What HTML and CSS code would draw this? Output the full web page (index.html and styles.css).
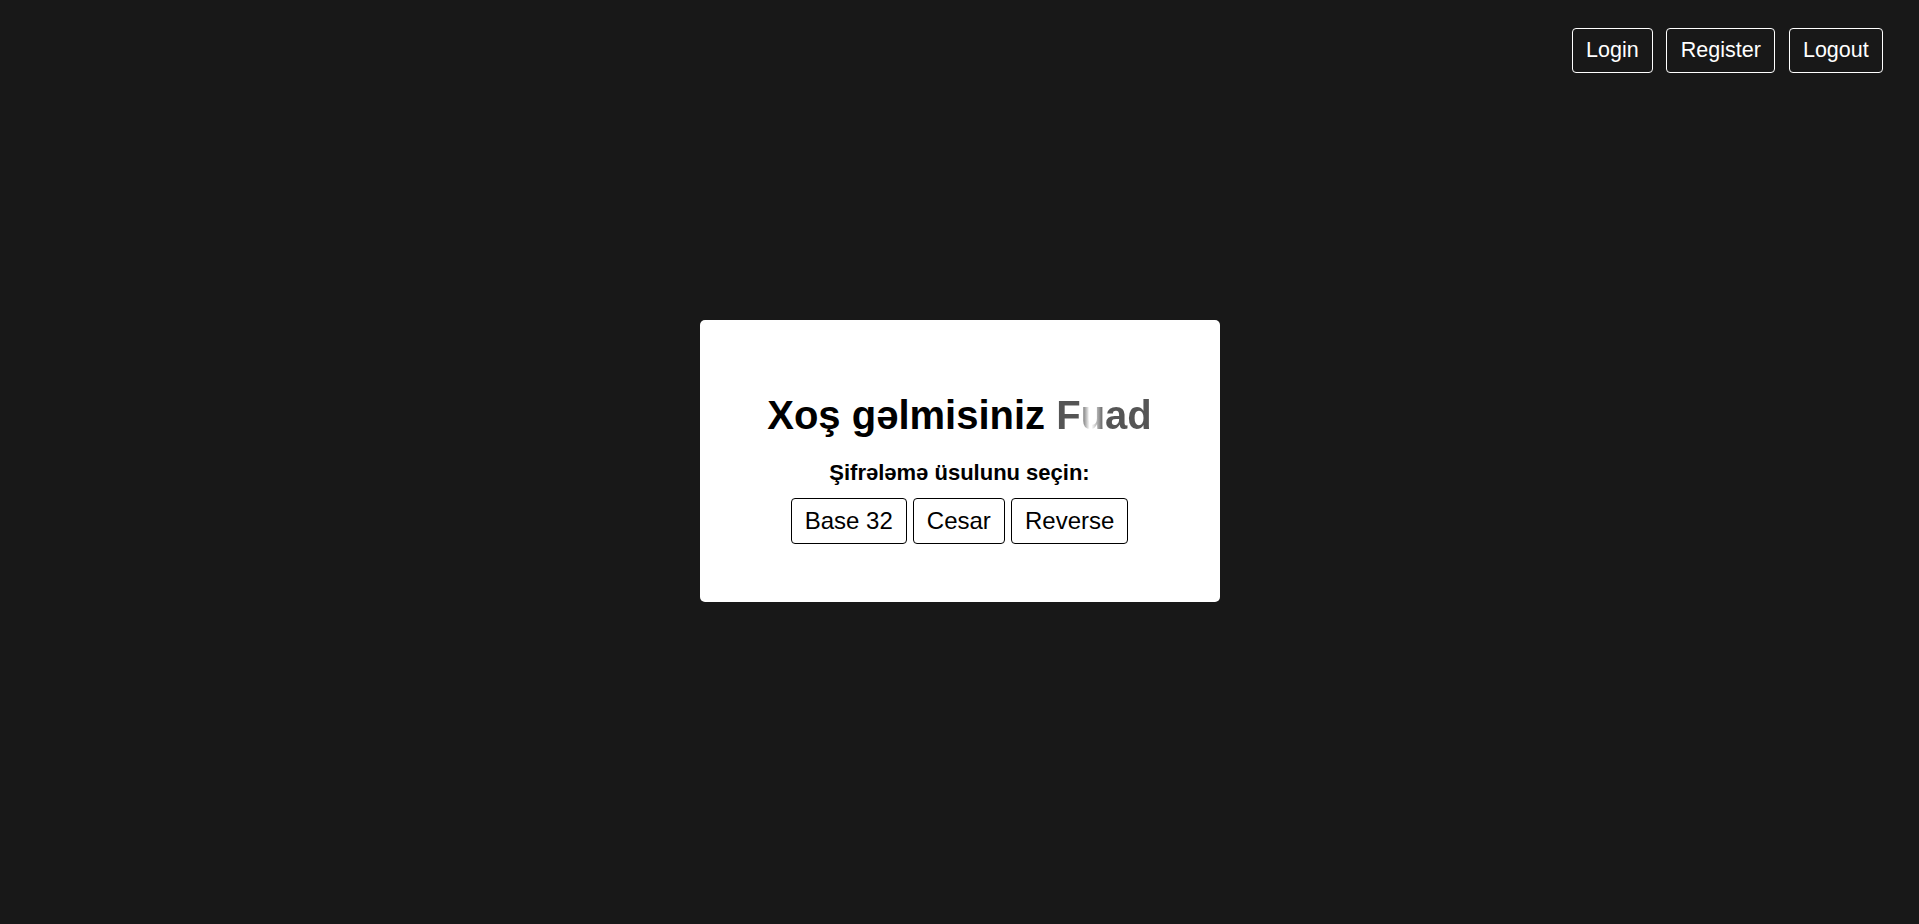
FILE: index.html
```html
<!DOCTYPE html>
<html lang="az">
<head>
<meta charset="utf-8">
<title>Şifrələmə</title>
<link rel="stylesheet" href="styles.css">
</head>
<body>
<header class="topbar">
  <nav class="nav">
    <button class="nav-btn">Login</button>
    <button class="nav-btn">Register</button>
    <button class="nav-btn">Logout</button>
  </nav>
</header>
<main class="stage">
  <section class="card">
    <h1 class="title">Xoş gəlmisiniz <span class="name">Fuad</span></h1>
    <p class="subtitle">Şifrələmə üsulunu seçin:</p>
    <div class="choices">
      <button class="choice">Base 32</button>
      <button class="choice">Cesar</button>
      <button class="choice">Reverse</button>
    </div>
  </section>
</main>
</body>
</html>
```
FILE: styles.css
```css
* { box-sizing: border-box; }
html, body {
  margin: 0;
  height: 100%;
}
body {
  background: #181818;
  font-family: "Liberation Sans", Arial, sans-serif;
  display: flex;
  flex-direction: column;
  overflow: hidden;
}
.topbar {
  height: 0;
  display: flex;
  justify-content: flex-end;
}
.nav {
  display: flex;
  gap: 13.5px;
  padding: 28px 36px 0 0;
  align-items: flex-start;
}
.nav-btn {
  font-family: inherit;
  font-size: 21.5px;
  line-height: 25px;
  color: #fff;
  background: transparent;
  border: 1px solid #fff;
  border-radius: 4px;
  padding: 9px 13.3px;
  cursor: pointer;
}
.stage {
  flex: 1;
  display: flex;
  align-items: center;
  justify-content: center;
}
.card {
  width: 520px;
  height: 282px;
  background: #fff;
  border-radius: 5px;
  display: flex;
  flex-direction: column;
  align-items: center;
  padding: 72.5px 20px 0;
  margin-top: -3px;
}
.title {
  margin: 0;
  font-size: 40px;
  line-height: 46px;
  font-weight: bold;
  color: #000;
  white-space: nowrap;
}
.name {
  background: linear-gradient(90deg, #555 0%, #555 26%, #fff 35%, #fff 37%, #555 50%, #555 100%);
  -webkit-background-clip: text;
  background-clip: text;
  color: transparent;
}
.subtitle {
  margin: 21.5px 0 0;
  font-size: 22px;
  line-height: 25px;
  font-weight: bold;
  color: #000;
}
.choices {
  display: flex;
  gap: 6.5px;
  margin-top: 13px;
}
.choice {
  font-family: inherit;
  font-size: 24px;
  line-height: 28px;
  color: #000;
  background: #fff;
  border: 1px solid #000;
  border-radius: 4px;
  padding: 8px 12.8px;
  cursor: pointer;
}
```
